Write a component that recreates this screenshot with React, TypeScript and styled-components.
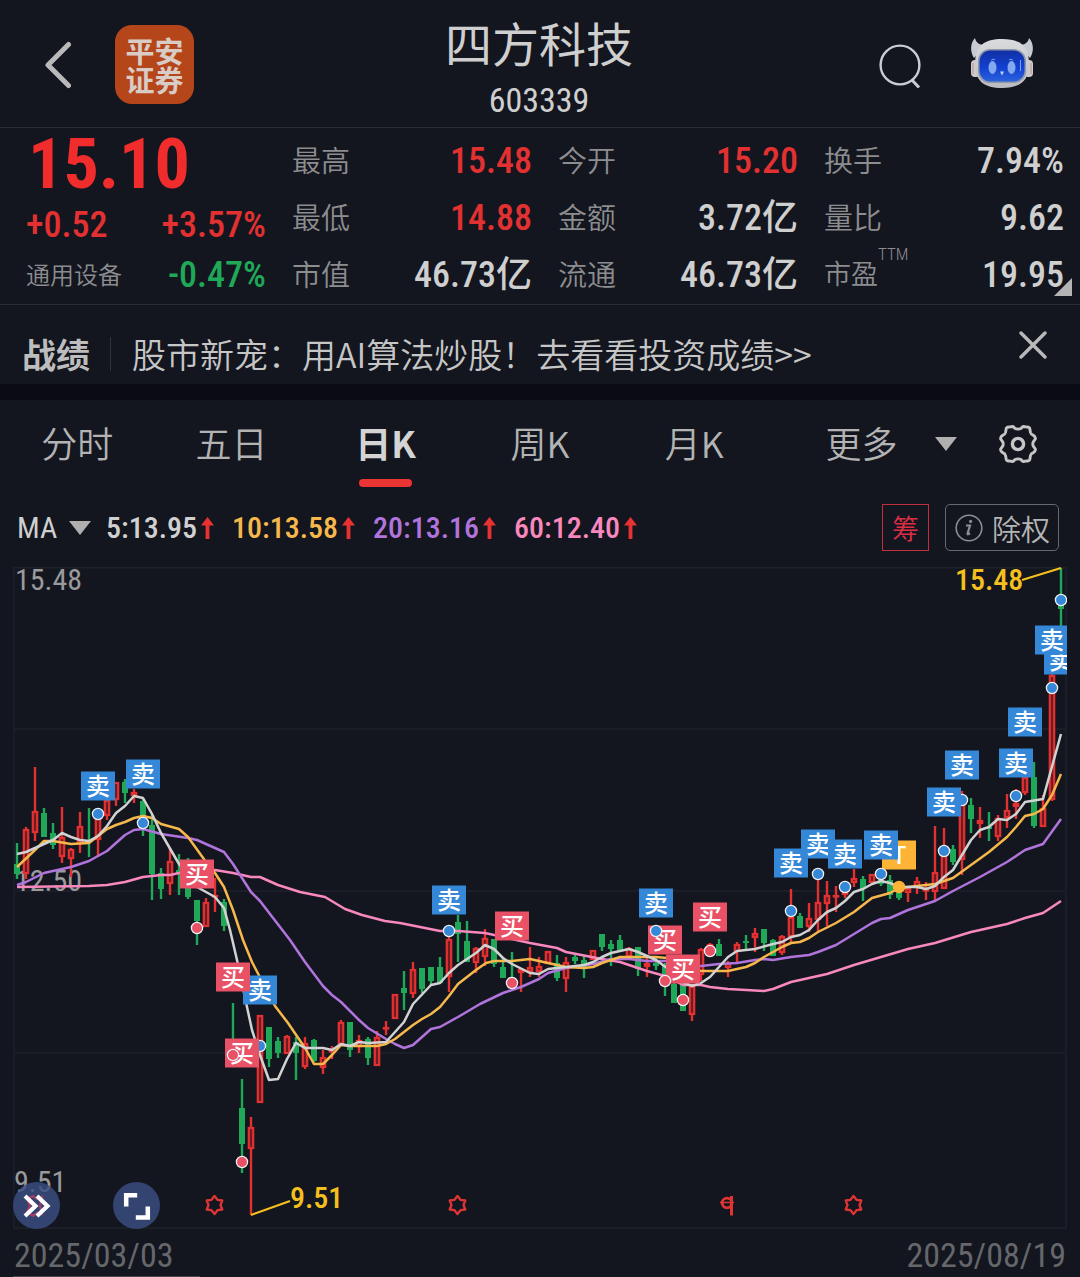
import React from "react";
import styled, { createGlobalStyle } from "styled-components";

const CJK = '"Noto Sans CJK SC", sans-serif';
const NUM = '"Roboto Condensed", Roboto, "Noto Sans CJK SC", sans-serif';

const color = {
  bg: "#13161f",
  band: "#0b0b15",
  line: "#2a2d36",
  grid: "#1f222b",
  text: "#cfcfcf",
  soft: "#b0b0b0",
  label: "#8d8d8f",
  red: "#e33131",
  green: "#1fa858",
  yellow: "#f7b84b",
  purple: "#b074dc",
  pink: "#f888bd",
};

const GlobalStyle = createGlobalStyle`
  *, *::before, *::after { box-sizing: border-box; }
  html { background: ${color.bg}; }
  body { margin: 0; background: ${color.bg}; color: ${color.text}; font-family: ${CJK}; }
  button, select { font: inherit; color: inherit; background: none; border: 0; padding: 0; margin: 0; cursor: pointer; }
  svg { display: block; }
`;

/* ---------- header ---------- */

const Header = styled.header`
  display: grid;
  grid-template-columns: 1fr auto 1fr;
  align-items: center;
  height: 128px;
  padding: 2px 46px 0 44px;
  border-bottom: 1px solid ${color.line};
`;
const HeaderSide = styled.div<{ $end?: boolean }>`
  display: flex;
  align-items: center;
  gap: ${(p) => (p.$end ? 48 : 42)}px;
  justify-content: ${(p) => (p.$end ? "flex-end" : "flex-start")};
`;
const IconButton = styled.button`
  display: flex;
  flex: none;
`;
const BrandLink = styled.a`
  display: grid;
  place-content: center;
  width: 79px;
  height: 79px;
  border-radius: 17px;
  background: #b5461a;
  color: #d9cbc5;
  font-weight: 700;
  font-size: 29px;
  line-height: 29px;
  text-decoration: none;
`;
const TitleBlock = styled.div`
  padding-top: 8px;
  text-align: center;
`;
const Title = styled.h1`
  margin: 0;
  font-weight: 400;
  font-size: 47px;
  line-height: 64px;
`;
const Code = styled.p`
  margin: 0;
  font: 400 34px/53px ${NUM};
`;

/* ---------- quote ---------- */

const Quote = styled.section`
  position: relative;
  display: grid;
  grid-template-columns: repeat(4, 1fr);
  column-gap: 26px;
  padding: 0 16px 0 26px;
  border-bottom: 1px solid ${color.line};
`;
const PriceColumn = styled.div`
  display: flex;
  flex-direction: column;
  height: 176px;
`;
const Price = styled.strong`
  font: 700 70px/72px ${NUM};
  color: #f02c2d;
  padding-left: 2px;
`;
const PriceRow = styled.div`
  display: flex;
  justify-content: space-between;
  align-items: center;
  height: 50px;
`;
const Industry = styled.span`
  font-weight: 350;
  font-size: 24px;
  line-height: 32px;
  padding-bottom: 3px;
  color: ${color.label};
`;
const Value = styled.span<{ $color?: string }>`
  font: 500 36px/48px ${NUM};
  color: ${(p) => p.$color || color.text};
`;
const Stats = styled.dl`
  margin: 0;
  padding-top: 4px;
`;
const Stat = styled.div`
  display: flex;
  justify-content: space-between;
  align-items: center;
  height: 57px;
`;
const StatName = styled.dt<{ $small?: boolean }>`
  font-weight: 350;
  font-size: ${(p) => (p.$small ? 27 : 29)}px;
  line-height: 48px;
  padding-bottom: 3px;
  color: ${color.label};
`;
const Sup = styled.sup`
  font: 300 17px/0 ${NUM};
  vertical-align: 24px;
`;
const StatValue = styled.dd`
  display: flex;
  margin: 0;
`;
const Corner = styled.i`
  position: absolute;
  right: 8px;
  bottom: 8px;
  border-left: 18px solid transparent;
  border-bottom: 18px solid #b4b4b4;
`;

/* ---------- promotion ---------- */

const Promo = styled.section`
  display: flex;
  align-items: center;
  height: 79px;
  padding: 18px 33px 0 22px;
  font-size: 34px;
  line-height: 48px;
`;
const PromoTag = styled.strong`
  font-weight: 700;
  color: #bdbdbd;
  padding-right: 20px;
`;
const PromoLink = styled.a`
  display: flex;
  align-items: center;
  flex: 1;
  font-weight: 350;
  color: #c6c6c6;
  text-decoration: none;
  &::before {
    content: "";
    height: 34px;
    border-left: 1px solid #30333c;
    margin-right: 21px;
  }
`;
const CloseButton = styled(IconButton)`
  align-self: flex-start;
  padding-top: 8px;
`;
const Band = styled.hr`
  height: 16px;
  margin: 0;
  border: 0;
  background: ${color.band};
`;

/* ---------- tabs ---------- */

const Tabs = styled.nav`
  display: grid;
  grid-template-columns: repeat(5, 2fr) 4fr;
  height: 87px;
  font-size: 36px;
  font-weight: 350;
  color: #b3b3b3;
`;
const Tab = styled.button<{ $active?: boolean }>`
  display: flex;
  flex-direction: column;
  align-items: center;
  justify-content: space-between;
  padding-top: 16px;
  line-height: 52px;
  font-weight: ${(p) => (p.$active ? 700 : 350)};
  color: ${(p) => (p.$active ? "#d4d4d4" : "inherit")};
  &::after {
    content: "";
    width: 53px;
    height: 8px;
    border-radius: 4px;
    background: ${(p) => (p.$active ? "#ec3434" : "transparent")};
  }
`;
const TabsEnd = styled.div`
  display: flex;
  align-items: center;
  justify-content: space-between;
  padding: 0 42px 0 54px;
`;
const Picker = styled.label<{ $gap: number }>`
  display: flex;
  align-items: center;
  gap: ${(p) => p.$gap}px;
`;
const Select = styled.select`
  appearance: none;
  outline: none;
  height: 56px;
  padding-bottom: 4px;
  option { color: #222; }
`;
const AverageSelect = styled(Select)`
  height: 40px;
  padding: 0;
`;
const Caret = styled.i`
  border: 11px solid transparent;
  border-top: 14px solid ${color.soft};
  border-bottom: 0;
`;

/* ---------- moving averages ---------- */

const AverageBar = styled.section`
  display: flex;
  align-items: center;
  height: 73px;
  padding: 8px 21px 0 17px;
  font: 400 30px/40px ${NUM};
`;
const Averages = styled.ul`
  display: flex;
  flex: 1;
  gap: 18px;
  margin: 0;
  padding: 0 0 0 15px;
  list-style: none;
`;
const Average = styled.li<{ $color: string }>`
  display: flex;
  align-items: center;
  gap: 4px;
  font-weight: 500;
  color: ${(p) => p.$color};
`;
const ChipButton = styled.button`
  width: 47px;
  height: 47px;
  margin-right: 16px;
  border: 1px solid #c2303f;
  color: #dc2f45;
  font: 350 27px/44px ${CJK};
`;
const RightsButton = styled.button`
  display: flex;
  align-items: center;
  gap: 9px;
  height: 47px;
  padding: 0 8px 0 9px;
  border: 1px solid #67696f;
  border-radius: 5px;
  color: #b5b5b5;
  font: 350 29px/44px ${CJK};
`;

/* ---------- chart ---------- */

const ChartArea = styled.section`
  position: relative;
`;
const ChartSvg = styled.svg`
  width: 100%;
  height: auto;
`;
const ChartTools = styled.div`
  position: absolute;
  left: 13px;
  bottom: 0;
  display: flex;
  gap: 53px;
`;
const RoundButton = styled.button`
  display: grid;
  place-items: center;
  width: 47px;
  height: 47px;
  border-radius: 50%;
  background: rgba(58, 78, 130, 0.82);
`;
const Dates = styled.footer`
  display: flex;
  justify-content: space-between;
  height: 48px;
  padding: 0 14px;
  font: 400 34px/52px ${NUM};
  color: #66676b;
`;
const Progress = styled.div`
  width: 187px;
  height: 1px;
  margin: -1px 0 0 13px;
  background: #4a4355;
`;

/* ---------- data ---------- */

type Row = [name: string, value: string, tone?: string, sup?: string];
const stats: Row[][] = [
  [["最高", "15.48", color.red], ["最低", "14.88", color.red], ["市值", "46.73亿"]],
  [["今开", "15.20", color.red], ["金额", "3.72亿"], ["流通", "46.73亿"]],
  [["换手", "7.94%"], ["量比", "9.62"], ["市盈", "19.95", undefined, "TTM"]],
];

const averages = [
  { text: "5:13.95", tone: "#d0d0d0" },
  { text: "10:13.58", tone: color.yellow },
  { text: "20:13.16", tone: color.purple },
  { text: "60:12.40", tone: color.pink },
];

// One day each: r(ise) or g (fall), high, body top, body bottom, low.
const candles = `
g843,864,874,879 r827,829,874,879 r767,811,833,841 g808,813,837,837 g823,833,845,849 r807,837,857,863
r848,849,859,877 r812,826,843,853 g808,840,842,857 r814,818,840,857 r798,800,816,820 r782,782,800,806
g779,782,793,803 r789,792,796,803 g798,801,816,836 g815,825,874,900 g868,873,889,899 r848,861,884,895
g854,870,873,895 g858,873,897,899 g900,900,921,945 r898,902,927,927 r878,895,897,912 g899,902,926,931
g1003,1040,1058,1060 g1079,1108,1144,1173 r1117,1127,1149,1215 r1015,1015,1103,1103 g1027,1027,1059,1067 g1037,1041,1053,1058
r1035,1036,1054,1054 g1037,1042,1053,1080 r1037,1043,1067,1069 g1039,1040,1061,1062 r1050,1057,1068,1074 r1046,1050,1052,1059
r1020,1022,1045,1046 g1022,1022,1050,1057 r1035,1040,1047,1053 g1037,1039,1058,1065 r1031,1037,1066,1066 r1021,1027,1029,1035
r994,994,1019,1019 g971,988,993,1010 r962,969,994,998 g968,968,989,993 g967,967,981,985 g957,967,983,984
r935,939,977,992 g915,922,934,962 g921,941,962,962 r947,948,963,973 r929,938,957,966 g939,939,964,967
g957,967,978,978 g952,977,980,984 r968,969,973,992 r947,967,972,977 r957,966,972,977 r951,951,964,964
g955,963,978,981 r957,962,979,992 g955,957,961,964 g956,960,967,978 r950,950,960,960 g934,934,947,951
g940,944,949,966 g935,940,950,950 r947,948,957,957 g947,947,969,976 r957,963,967,977 g957,963,966,970
g963,966,977,996 g973,984,1003,1003 g985,985,1011,1011 r984,986,1015,1021 r948,949,975,981 r943,944,952,952
g939,944,956,956 r961,963,968,977 r942,944,952,963 g935,941,943,951 r928,933,938,952 g929,929,943,951
g939,940,956,956 r935,936,953,955 r889,917,937,942 g913,916,928,928 r903,918,927,932 r878,902,920,932
r881,895,904,926 r886,895,897,912 r890,892,895,898 r869,878,883,887 g876,879,889,901 r874,874,883,883
g880,880,884,886 g875,880,895,899 g892,893,898,900 r887,888,893,902 r877,881,888,894 r882,889,891,900
r826,872,892,900 r828,855,889,889 g845,849,862,865 r791,800,860,875 g798,805,819,833 r807,820,824,838
g812,827,829,841 r815,818,837,841 r794,810,818,828 r789,803,807,819 r777,777,793,795 g762,777,826,828
r795,808,827,827 r670,675,800,801 g568,605,609,640`
  .trim()
  .split(/\s+/)
  .map((day, i) => {
    const [high, top, bottom, low] = day.slice(1).split(",").map(Number);
    return { x: 17 + i * 9, up: day[0] === "r", high, top, bottom, low };
  });

const curves = [
  {
    tone: color.pink,
    points:
      "17,887 89,886 107,885 125,882 143,877 161,875 170,875 188,871 215,870 233,873 251,877 260,877 278,885 300,892 325,897 345,909 362,915 385,921 400,923 440,931 458,931 485,933 530,943 557,948 566,952 602,959 620,962 647,971 665,976 683,985 701,985 710,987 728,989 764,991 773,989 791,982 809,978 827,974 854,965 881,957 908,949 935,943 971,932 1007,924 1025,918 1043,913 1061,901",
  },
  {
    tone: color.purple,
    points:
      "17,885 26,882 44,873 71,867 89,861 107,851 125,835 134,830 143,829 161,834 188,838 197,840 224,852 233,864 251,892 260,901 290,940 305,962 323,986 332,995 341,1002 359,1020 368,1028 386,1039 395,1044 404,1048 413,1045 431,1029 440,1027 458,1017 480,1004 503,993 521,987 539,979 548,973 566,968 593,964 611,959 629,959 647,961 667,961 685,967 701,966 719,964 737,963 755,960 764,959 773,960 791,957 809,955 818,952 836,945 854,934 872,923 881,919 890,918 908,910 935,901 953,891 980,877 998,867 1007,862 1025,850 1043,844 1061,819",
  },
  {
    tone: color.yellow,
    points:
      "17,867 35,850 44,841 53,841 71,844 89,843 98,836 107,829 116,825 125,822 134,818 143,816 152,818 161,824 179,829 188,837 206,862 215,873 224,887 233,910 243,940 252,962 275,1006 288,1023 305,1048 314,1064 323,1064 332,1055 341,1045 350,1046 377,1046 386,1044 395,1039 413,1025 422,1019 431,1014 440,1007 449,996 458,984 467,977 476,970 486,963 494,961 512,961 530,959 539,961 566,967 584,968 593,967 602,963 620,957 656,957 667,958 685,968 701,971 728,971 746,967 755,963 764,957 773,952 782,947 791,943 800,942 809,938 818,932 836,923 854,912 872,898 890,893 899,888 917,886 935,884 953,878 971,865 989,852 1007,837 1016,827 1025,816 1034,814 1043,809 1052,795 1061,774",
  },
  {
    tone: "#d2d2d2",
    points:
      "17,854 26,852 44,844 53,840 62,833 71,837 80,840 89,841 98,836 107,826 116,813 125,806 134,796 143,798 152,814 161,833 179,864 197,887 206,892 215,897 224,908 230,930 237,960 247,1007 252,1030 260,1055 269,1080 278,1079 287,1059 296,1043 305,1048 323,1048 332,1050 341,1044 350,1046 359,1042 368,1043 386,1042 395,1032 404,1022 413,1004 431,985 440,983 449,973 458,965 467,959 476,953 485,945 494,949 503,958 512,964 530,973 539,974 548,969 566,967 584,965 593,962 602,957 611,953 620,951 629,949 638,952 647,956 656,960 667,968 680,981 692,986 701,983 710,977 719,967 728,957 737,951 755,949 773,944 782,942 791,937 800,935 809,930 818,920 827,912 836,908 845,901 854,892 863,889 872,884 881,881 890,883 899,887 917,887 926,889 935,886 944,877 953,870 962,855 971,840 980,830 989,827 998,819 1007,820 1016,814 1025,802 1043,799 1061,734",
  },
];

// Trades in paint order: text, flag centre, dot height on the same day.
type Trade = { x: number; flag: number; dot?: number; side: "卖" | "买" | "T"; over?: boolean };
const trades: Trade[] = [
  { side: "卖", x: 98, flag: 786, dot: 814 },
  { side: "卖", x: 143, flag: 774, dot: 823 },
  { side: "买", x: 197, flag: 874, dot: 928 },
  { side: "卖", x: 260, flag: 990, dot: 1046 },
  { side: "买", x: 233, flag: 977, dot: 1055, over: true },
  { side: "买", x: 242, flag: 1053, dot: 1162 },
  { side: "卖", x: 449, flag: 900, dot: 931 },
  { side: "买", x: 512, flag: 926, dot: 983 },
  { side: "卖", x: 656, flag: 903, dot: 931, over: true },
  { side: "买", x: 665, flag: 940, dot: 981, over: true },
  { side: "买", x: 683, flag: 969, dot: 1000 },
  { side: "买", x: 710, flag: 917, dot: 951 },
  { side: "T", x: 899, flag: 855, dot: 887, over: true },
  { side: "卖", x: 791, flag: 863, dot: 911 },
  { side: "卖", x: 818, flag: 844, dot: 874 },
  { side: "卖", x: 845, flag: 854, dot: 887 },
  { side: "卖", x: 881, flag: 845, dot: 874, over: true },
  { side: "卖", x: 962, flag: 765, dot: 800 },
  { side: "卖", x: 944, flag: 802, dot: 851 },
  { side: "卖", x: 1016, flag: 763, dot: 796 },
  { side: "卖", x: 1025, flag: 722 },
  { side: "卖", x: 1061, flag: 660, dot: 600 },
  { side: "卖", x: 1052, flag: 640, dot: 688, over: true },
];
const tradeColor = { 卖: "#3587d8", 买: "#e85166", T: "#fdb436" };

/* ---------- drawings ---------- */

const BackIcon = () => (
  <svg width="29" height="48" viewBox="0 0 29 48" fill="none" stroke="#b9b9b9" strokeWidth="5" strokeLinecap="round" strokeLinejoin="round">
    <path d="M24.500 3.500 4 24l20.500 20.500" />
  </svg>
);
const SearchIcon = () => (
  <svg width="44" height="46" viewBox="0 0 44 46" fill="none" stroke="#c9ccd3" strokeWidth="2.400">
    <circle cx="22" cy="23" r="19.400" />
    <path d="m33.500 37.500 7.500 8" strokeWidth="3" />
  </svg>
);
const RobotIcon = () => (
  <svg width="64" height="54" viewBox="0 4 64 54">
    <defs>
      <linearGradient id="shell" x1="0" y1="0" x2="0" y2="1">
        <stop offset="0" stopColor="#dadbdd" />
        <stop offset="1" stopColor="#b9bbc0" />
      </linearGradient>
      <linearGradient id="visor" x1="0" y1="0" x2="0" y2="1">
        <stop offset="0" stopColor="#1230a4" />
        <stop offset=".55" stopColor="#1240d2" />
        <stop offset="1" stopColor="#2a62dc" />
      </linearGradient>
    </defs>
    <path d="M5 4C0 9 0 18 4 24l13-14C10 12 6 9 5 4ZM59 4c5 5 5 14 1 20L47 10c7 2 11-1 12-6Z" fill="#c6cad1" />
    <rect x="1" y="26" width="9" height="17" rx="4" fill="#cfcbcc" />
    <rect x="54" y="26" width="9" height="17" rx="4" fill="#cfcbcc" />
    <path d="M3 29v11M61 29v11" stroke="#b98f94" strokeWidth="1" />
    <path d="M32 5c17 0 27 6 27 25 0 17-9 24-27 24S5 47 5 30C5 11 15 5 32 5Z" fill="url(#shell)" />
    <rect x="8" y="15" width="48" height="34" rx="12" fill="#8f97ad" />
    <rect x="9.500" y="16.500" width="45" height="31" rx="11" fill="url(#visor)" />
    <ellipse cx="22.500" cy="33.500" rx="4" ry="6.500" fill="#83a8ee" />
    <ellipse cx="41.500" cy="33.500" rx="4" ry="6.500" fill="#83a8ee" />
    <path d="M21 26.500c1-1.500 3-1.500 4-.5M39 26c1-1 3-1 4 .5M50.500 26v11" stroke="#7d9ff0" fill="none" />
    <path d="m30 37.500 2 4 2-4Z" fill="#c3d3f5" />
  </svg>
);
const CloseIcon = () => (
  <svg width="28" height="28" viewBox="0 0 28 28" stroke="#b9b9b9" strokeWidth="3.400" strokeLinecap="round">
    <path d="m2 2 24 24M26 2 2 26" />
  </svg>
);
const GearIcon = () => (
  <svg width="40" height="40" viewBox="-20 -20 40 40" fill="none" stroke="#c6c6c6" strokeWidth="3" strokeLinejoin="round">
    <path d="M-9.500-17.500Q-11-18-12.200-16.500L-13-12Q-13.500-10-16-9Q-18-8-18.200-5.500L-15.800-2Q-15 0-15.800 2L-18.200 5.500Q-18 8-16 9Q-13.500 10-13 12L-12.200 16.500Q-11 18-9.500 17.500L-5.500 18.200Q-4.500 18-3.500 16.500Q0 14.500 3.500 16.500Q4.500 18 5.500 18.200L9.500 17.500Q11 18 12.200 16.500L13 12Q13.500 10 16 9Q18 8 18.200 5.500L15.800 2Q15 0 15.800-2L18.200-5.500Q18-8 16-9Q13.500-10 13-12L12.200-16.500Q11-18 9.500-17.500L5.500-18.200Q4.500-18 3.500-16.500Q0-14.500-3.500-16.500Q-4.500-18-5.500-18.200Z" transform="scale(.96)" />
    <circle r="5.600" strokeWidth="3.400" />
  </svg>
);
const UpArrow = () => (
  <svg width="13" height="22" viewBox="0 0 13 22" fill="#e8322f">
    <path d="M6.500 0 13 8.500H8.400V22H4.600V8.500H0Z" />
  </svg>
);
const InfoIcon = () => (
  <svg width="28" height="28" viewBox="0 0 28 28" fill="none" stroke="#8c8d91" strokeWidth="1.600">
    <circle cx="14" cy="14" r="12.800" />
    <path d="M11 11.500h4l-2.500 8.300q-.2 1.200 2.500-.5" strokeWidth="2.200" />
    <circle cx="15.600" cy="7.400" r="1.600" fill="#8c8d91" stroke="none" />
  </svg>
);
const ForwardIcon = () => (
  <svg width="28" height="24" viewBox="0 0 28 24" fill="none" strokeWidth="4.200">
    <path d="M4 5l6-3 4 3 5-2-2 9 2 8-5-1-4 3-6-4 3-6Z" stroke="#a13d62" strokeWidth="2.200" />
    <path d="m2 2 10.500 10L2 22M14 2l10.500 10L14 22" stroke="#fff" />
  </svg>
);
const ExpandIcon = () => (
  <svg width="28" height="28" viewBox="0 0 28 28" fill="none" stroke="#fff" strokeWidth="4.500">
    <path d="M3.200 14.500V3.200h11M24.800 14.500v11h-12" />
  </svg>
);

const star = Array.from({ length: 12 }, (_, i) => {
  const r = i % 2 ? 6 : 9;
  const a = (i * Math.PI) / 6;
  return `${(r * Math.sin(a)).toFixed(1)},${(-r * Math.cos(a)).toFixed(1)}`;
}).join(" ");

const Dot = ({ t }: { t: Trade }) =>
  t.dot === undefined ? null : (
    <circle cx={t.x} cy={t.dot} r={5.6} fill={tradeColor[t.side]} stroke={t.side === "T" ? tradeColor.T : "#f0f0f0"} strokeWidth="1.300" />
  );

const Chart = () => (
  <ChartSvg viewBox="0 560 1080 669" role="img" aria-label="日K">
    <defs>
      <clipPath id="frame">
        <rect x="14" y="560" width="1053" height="669" />
      </clipPath>
    </defs>
    <g stroke={color.grid} strokeWidth="1.400">
      {[567.7, 729, 891, 1053, 1228].map((y) => (
        <path key={y} d={`M14 ${y}H1066`} />
      ))}
      <path d="M14 567V1228M1066 567V1228" />
    </g>
    <g fill="#9a9a9c" fontFamily={NUM} fontSize="30" fontWeight="400">
      <text x="15" y="590">15.48</text>
      <text x="15" y="891">12.50</text>
      <text x="14" y="1192">9.51</text>
    </g>
    {candles.map((c) => (
      <g key={c.x}>
        <path d={`M${c.x} ${c.high}V${c.low}`} stroke={c.up ? color.red : color.green} strokeWidth="2.400" />
        {c.up ? (
          <rect x={c.x - 2.2} y={c.top + 1} width={4.4} height={Math.max(c.bottom - c.top - 2, 0.5)} fill="#6d1c22" stroke={color.red} strokeWidth="2.200" />
        ) : (
          <rect x={c.x - 3} y={c.top} width={6} height={c.bottom - c.top} fill={color.green} />
        )}
      </g>
    ))}
    <g fill="none" strokeWidth="2.500" strokeLinejoin="round">
      {curves.map((c) => (
        <polyline key={c.tone} points={c.points} stroke={c.tone} />
      ))}
    </g>
    <g clipPath="url(#frame)">
      {trades.map((t) => (
        <g key={`${t.x}-${t.flag}`}>
          {!t.over && <Dot t={t} />}
          <rect x={t.x - 17} y={t.flag - 14.5} width="34" height="29" fill={tradeColor[t.side]} />
          <text x={t.x} y={t.flag + 9} textAnchor="middle" fill="#fff" fontFamily={CJK} fontSize="24" fontWeight="500">
            {t.side}
          </text>
        </g>
      ))}
      {trades.filter((t) => t.over).map((t) => (
        <Dot key={t.x} t={t} />
      ))}
    </g>
    <g stroke="#f5c01e" strokeWidth="2.200">
      <path d="M1022 580 1061 568M251 1215 290 1201" />
    </g>
    <g fill="#f5c01e" fontFamily={NUM} fontSize="30" fontWeight="500">
      <text x="955" y="590">15.48</text>
      <text x="290" y="1208">9.51</text>
    </g>
    <g fill="none" stroke="#e03434" strokeWidth="2.300" strokeLinejoin="round">
      {[214.5, 457.5, 853.5].map((x) => (
        <polygon key={x} points={star} transform={`translate(${x} 1205)`} />
      ))}
      <path d="M731.500 1196v19.500" strokeWidth="3" />
      <path d="M720 1202.500h14" strokeWidth="1.500" />
      <circle cx="727" cy="1203" r="4.800" strokeWidth="2.800" />
    </g>
  </ChartSvg>
);

export default function App() {
  return (
    <>
      <GlobalStyle />
      <Header>
        <HeaderSide>
          <IconButton aria-label="返回"><BackIcon /></IconButton>
          <BrandLink href="#broker"><span>平安</span><span>证券</span></BrandLink>
        </HeaderSide>
        <TitleBlock>
          <Title>四方科技</Title>
          <Code>603339</Code>
        </TitleBlock>
        <HeaderSide $end>
          <IconButton aria-label="搜索"><SearchIcon /></IconButton>
          <IconButton aria-label="智能助手"><RobotIcon /></IconButton>
        </HeaderSide>
      </Header>

      <Quote>
        <PriceColumn>
          <Price>15.10</Price>
          <PriceRow>
            <Value $color={color.red}>+0.52</Value>
            <Value $color={color.red}>+3.57%</Value>
          </PriceRow>
          <PriceRow>
            <Industry>通用设备</Industry>
            <Value $color={color.green}>-0.47%</Value>
          </PriceRow>
        </PriceColumn>
        {stats.map((column) => (
          <Stats key={column[0][0]}>
            {column.map(([name, value, tone, sup]) => (
              <Stat key={name}>
                <StatName $small={!!sup}>{name}{sup && <Sup>{sup}</Sup>}</StatName>
                <StatValue><Value $color={tone}>{value}</Value></StatValue>
              </Stat>
            ))}
          </Stats>
        ))}
        <Corner />
      </Quote>

      <Promo>
        <PromoTag>战绩</PromoTag>
        <PromoLink href="#results">股市新宠：用AI算法炒股！去看看投资成绩&gt;&gt;</PromoLink>
        <CloseButton aria-label="关闭"><CloseIcon /></CloseButton>
      </Promo>
      <Band />

      <Tabs>
        {["分时", "五日", "日K", "周K", "月K"].map((name) => (
          <Tab key={name} $active={name === "日K"}>{name}</Tab>
        ))}
        <TabsEnd>
          <Picker $gap={37}>
            <Select aria-label="更多周期"><option>更多</option></Select>
            <Caret />
          </Picker>
          <IconButton aria-label="设置"><GearIcon /></IconButton>
        </TabsEnd>
      </Tabs>

      <AverageBar>
        <Picker $gap={11}>
          <AverageSelect aria-label="指标"><option>MA</option></AverageSelect>
          <Caret />
        </Picker>
        <Averages>
          {averages.map((a) => (
            <Average key={a.text} $color={a.tone}>{a.text}<UpArrow /></Average>
          ))}
        </Averages>
        <ChipButton>筹</ChipButton>
        <RightsButton><InfoIcon />除权</RightsButton>
      </AverageBar>

      <ChartArea>
        <Chart />
        <ChartTools>
          <RoundButton aria-label="展开"><ForwardIcon /></RoundButton>
          <RoundButton aria-label="全屏"><ExpandIcon /></RoundButton>
        </ChartTools>
      </ChartArea>
      <Dates>
        <time>2025/03/03</time>
        <time>2025/08/19</time>
      </Dates>
      <Progress />
    </>
  );
}
